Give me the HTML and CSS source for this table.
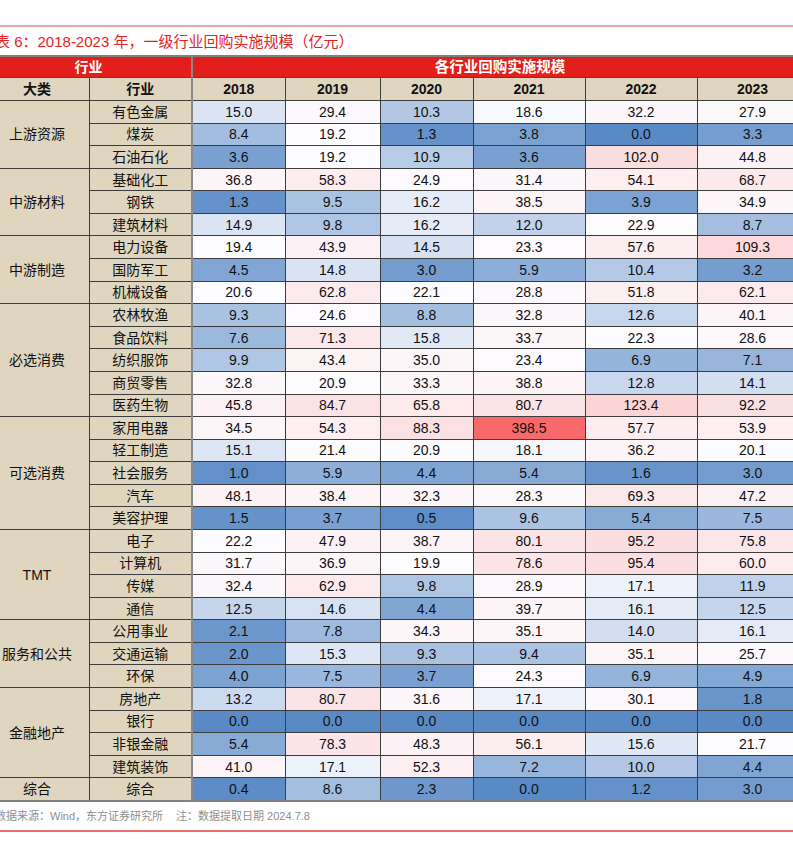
FILE: index.html
```html
<!DOCTYPE html>
<html lang="zh-CN">
<head>
<meta charset="utf-8">
<title>一级行业回购实施规模</title>
<link rel="stylesheet" href="styles.css">
</head>
<body>
<div class="page">
  <div class="rule-top"></div>
  <div class="title">表 6：2018-2023 年，一级行业回购实施规模（亿元）</div>
  <table class="grid">
    <colgroup>
      <col class="c-cat"><col class="c-ind"><col class="c-y1"><col class="c-y2"><col class="c-y3"><col class="c-y4"><col class="c-y5"><col class="c-y6">
    </colgroup>
    <thead>
      <tr class="head-red">
        <th colspan="2" class="split">行业</th>
        <th colspan="6" class="wide">各行业回购实施规模</th>
      </tr>
      <tr class="head-beige">
        <th>大类</th><th class="split">行业</th><th>2018</th><th>2019</th><th>2020</th><th>2021</th><th>2022</th><th>2023</th>
      </tr>
    </thead>
    <tbody>
      <tr><td class="cat" rowspan="3">上游资源</td><td class="ind">有色金属</td><td class="v">15.0</td><td class="v">29.4</td><td class="v">10.3</td><td class="v">18.6</td><td class="v">32.2</td><td class="v">27.9</td></tr>
      <tr><td class="ind">煤炭</td><td class="v">8.4</td><td class="v">19.2</td><td class="v">1.3</td><td class="v">3.8</td><td class="v">0.0</td><td class="v">3.3</td></tr>
      <tr><td class="ind">石油石化</td><td class="v">3.6</td><td class="v">19.2</td><td class="v">10.9</td><td class="v">3.6</td><td class="v">102.0</td><td class="v">44.8</td></tr>
      <tr><td class="cat" rowspan="3">中游材料</td><td class="ind">基础化工</td><td class="v">36.8</td><td class="v">58.3</td><td class="v">24.9</td><td class="v">31.4</td><td class="v">54.1</td><td class="v">68.7</td></tr>
      <tr><td class="ind">钢铁</td><td class="v">1.3</td><td class="v">9.5</td><td class="v">16.2</td><td class="v">38.5</td><td class="v">3.9</td><td class="v">34.9</td></tr>
      <tr><td class="ind">建筑材料</td><td class="v">14.9</td><td class="v">9.8</td><td class="v">16.2</td><td class="v">12.0</td><td class="v">22.9</td><td class="v">8.7</td></tr>
      <tr><td class="cat" rowspan="3">中游制造</td><td class="ind">电力设备</td><td class="v">19.4</td><td class="v">43.9</td><td class="v">14.5</td><td class="v">23.3</td><td class="v">57.6</td><td class="v">109.3</td></tr>
      <tr><td class="ind">国防军工</td><td class="v">4.5</td><td class="v">14.8</td><td class="v">3.0</td><td class="v">5.9</td><td class="v">10.4</td><td class="v">3.2</td></tr>
      <tr><td class="ind">机械设备</td><td class="v">20.6</td><td class="v">62.8</td><td class="v">22.1</td><td class="v">28.8</td><td class="v">51.8</td><td class="v">62.1</td></tr>
      <tr><td class="cat" rowspan="5">必选消费</td><td class="ind">农林牧渔</td><td class="v">9.3</td><td class="v">24.6</td><td class="v">8.8</td><td class="v">32.8</td><td class="v">12.6</td><td class="v">40.1</td></tr>
      <tr><td class="ind">食品饮料</td><td class="v">7.6</td><td class="v">71.3</td><td class="v">15.8</td><td class="v">33.7</td><td class="v">22.3</td><td class="v">28.6</td></tr>
      <tr><td class="ind">纺织服饰</td><td class="v">9.9</td><td class="v">43.4</td><td class="v">35.0</td><td class="v">23.4</td><td class="v">6.9</td><td class="v">7.1</td></tr>
      <tr><td class="ind">商贸零售</td><td class="v">32.8</td><td class="v">20.9</td><td class="v">33.3</td><td class="v">38.8</td><td class="v">12.8</td><td class="v">14.1</td></tr>
      <tr><td class="ind">医药生物</td><td class="v">45.8</td><td class="v">84.7</td><td class="v">65.8</td><td class="v">80.7</td><td class="v">123.4</td><td class="v">92.2</td></tr>
      <tr><td class="cat" rowspan="5">可选消费</td><td class="ind">家用电器</td><td class="v">34.5</td><td class="v">54.3</td><td class="v">88.3</td><td class="v">398.5</td><td class="v">57.7</td><td class="v">53.9</td></tr>
      <tr><td class="ind">轻工制造</td><td class="v">15.1</td><td class="v">21.4</td><td class="v">20.9</td><td class="v">18.1</td><td class="v">36.2</td><td class="v">20.1</td></tr>
      <tr><td class="ind">社会服务</td><td class="v">1.0</td><td class="v">5.9</td><td class="v">4.4</td><td class="v">5.4</td><td class="v">1.6</td><td class="v">3.0</td></tr>
      <tr><td class="ind">汽车</td><td class="v">48.1</td><td class="v">38.4</td><td class="v">32.3</td><td class="v">28.3</td><td class="v">69.3</td><td class="v">47.2</td></tr>
      <tr><td class="ind">美容护理</td><td class="v">1.5</td><td class="v">3.7</td><td class="v">0.5</td><td class="v">9.6</td><td class="v">5.4</td><td class="v">7.5</td></tr>
      <tr><td class="cat" rowspan="4">TMT</td><td class="ind">电子</td><td class="v">22.2</td><td class="v">47.9</td><td class="v">38.7</td><td class="v">80.1</td><td class="v">95.2</td><td class="v">75.8</td></tr>
      <tr><td class="ind">计算机</td><td class="v">31.7</td><td class="v">36.9</td><td class="v">19.9</td><td class="v">78.6</td><td class="v">95.4</td><td class="v">60.0</td></tr>
      <tr><td class="ind">传媒</td><td class="v">32.4</td><td class="v">62.9</td><td class="v">9.8</td><td class="v">28.9</td><td class="v">17.1</td><td class="v">11.9</td></tr>
      <tr><td class="ind">通信</td><td class="v">12.5</td><td class="v">14.6</td><td class="v">4.4</td><td class="v">39.7</td><td class="v">16.1</td><td class="v">12.5</td></tr>
      <tr><td class="cat" rowspan="3">服务和公共</td><td class="ind">公用事业</td><td class="v">2.1</td><td class="v">7.8</td><td class="v">34.3</td><td class="v">35.1</td><td class="v">14.0</td><td class="v">16.1</td></tr>
      <tr><td class="ind">交通运输</td><td class="v">2.0</td><td class="v">15.3</td><td class="v">9.3</td><td class="v">9.4</td><td class="v">35.1</td><td class="v">25.7</td></tr>
      <tr><td class="ind">环保</td><td class="v">4.0</td><td class="v">7.5</td><td class="v">3.7</td><td class="v">24.3</td><td class="v">6.9</td><td class="v">4.9</td></tr>
      <tr><td class="cat" rowspan="4">金融地产</td><td class="ind">房地产</td><td class="v">13.2</td><td class="v">80.7</td><td class="v">31.6</td><td class="v">17.1</td><td class="v">30.1</td><td class="v">1.8</td></tr>
      <tr><td class="ind">银行</td><td class="v">0.0</td><td class="v">0.0</td><td class="v">0.0</td><td class="v">0.0</td><td class="v">0.0</td><td class="v">0.0</td></tr>
      <tr><td class="ind">非银金融</td><td class="v">5.4</td><td class="v">78.3</td><td class="v">48.3</td><td class="v">56.1</td><td class="v">15.6</td><td class="v">21.7</td></tr>
      <tr><td class="ind">建筑装饰</td><td class="v">41.0</td><td class="v">17.1</td><td class="v">52.3</td><td class="v">7.2</td><td class="v">10.0</td><td class="v">4.4</td></tr>
      <tr><td class="cat">综合</td><td class="ind">综合</td><td class="v">0.4</td><td class="v">8.6</td><td class="v">2.3</td><td class="v">0.0</td><td class="v">1.2</td><td class="v">3.0</td></tr>
    </tbody>
  </table>
  <div class="note">数据来源：Wind，东方证券研究所<span class="gap">注：数据提取日期 2024.7.8</span></div>
  <div class="rule-bottom"></div>
</div>
<script src="script.js"></script>
</body>
</html>
```

FILE: styles.css
```css
html, body {
  margin: 0;
  padding: 0;
  background: #ffffff;
  overflow: hidden;
}

body {
  font-family: "Liberation Sans", "Noto Sans CJK SC", sans-serif;
  color: #111111;
}

.page {
  margin-left: -16px;
  width: 823px;
  padding-top: 25px;
}

.rule-top {
  height: 2px;
  background: #f2a2a2;
}

.title {
  height: 28px;
  line-height: 29px;
  padding-left: 11px;
  font-size: 15px;
  color: #e2231f;
  white-space: nowrap;
}

.grid {
  border-collapse: collapse;
  table-layout: fixed;
  width: 823px;
  font-size: 14px;
  border-top: 2px solid #7f7f7f;
  border-bottom: 2px solid #7f7f7f;
}

.c-cat { width: 104px; }
.c-ind { width: 103px; }
.c-y1 { width: 93px; }
.c-y2 { width: 95px; }
.c-y3 { width: 93px; }
.c-y4 { width: 112px; }
.c-y5 { width: 112px; }
.c-y6 { width: 111px; }

.grid th,
.grid td {
  padding: 0;
  text-align: center;
  vertical-align: middle;
  white-space: nowrap;
  border: 1px solid #3d3d3d;
  line-height: 16px;
}

.head-red th {
  background: #e21f1b;
  color: #ffffff;
  font-weight: bold;
  height: 20px;
  border-left: 2px solid #8a8a8a;
  border-right: 2px solid #8a8a8a;
  border-bottom: 1px solid #4a4a4a;
}

.head-red th.wide {
  text-align: center;
  font-size: 14.5px;
}

.head-beige th {
  background: #e0d6bf;
  color: #111111;
  font-weight: bold;
  height: 22px;
}

.grid .split {
  border-right: 2px solid #8a8a8a;
}

.grid td {
  height: 21.58px;
}

.grid td.cat,
.grid td.ind {
  background: #e0d6bf;
}

.grid td.ind {
  border-right: 2px solid #8a8a8a;
}

.note {
  height: 28px;
  line-height: 28px;
  padding-left: 11px;
  font-size: 11px;
  color: #8e8e8e;
  white-space: nowrap;
}

.gap {
  margin-left: 13px;
}

.rule-bottom {
  height: 2px;
  background: #eb6d6d;
}
```

FILE: script.js
```js
(function () {
  var cells = Array.prototype.slice.call(document.querySelectorAll('td.v'));
  var vals = cells.map(function (c) { return parseFloat(c.textContent); });
  var sorted = vals.slice().sort(function (a, b) { return a - b; });
  var n = sorted.length;
  var pos = (n - 1) * 0.5;
  var lo = Math.floor(pos);
  var mid = sorted[lo] + (sorted[Math.min(lo + 1, n - 1)] - sorted[lo]) * (pos - lo);
  var min = sorted[0];
  var max = sorted[n - 1];
  var cLow = [90, 138, 198];
  var cMid = [252, 252, 255];
  var cHigh = [248, 105, 107];
  function mix(a, b, t) {
    return [0, 1, 2].map(function (i) { return Math.round(a[i] + (b[i] - a[i]) * t); });
  }
  cells.forEach(function (c, i) {
    var v = vals[i];
    var col;
    if (v <= mid) {
      col = mix(cLow, cMid, mid === min ? 1 : (v - min) / (mid - min));
    } else {
      col = mix(cMid, cHigh, (v - mid) / (max - mid));
    }
    c.style.backgroundColor = 'rgb(' + col.join(',') + ')';
  });
})();
```
